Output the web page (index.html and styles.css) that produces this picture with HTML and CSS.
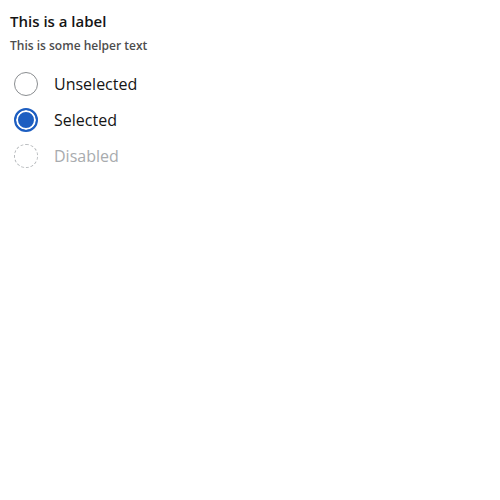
FILE: index.html
```html
<!DOCTYPE html>
<html>
<head>
<meta charset="utf-8">
<link rel="stylesheet" href="styles.css">
</head>
<body>
<div class="field">
  <div class="label">This is a label</div>
  <div class="helper">This is some helper text</div>
  <div class="options">
    <label class="option">
      <span class="radio"></span>
      <span class="text">Unselected</span>
    </label>
    <label class="option">
      <span class="radio checked"></span>
      <span class="text">Selected</span>
    </label>
    <label class="option disabled">
      <span class="radio"></span>
      <span class="text">Disabled</span>
    </label>
  </div>
</div>
</body>
</html>
```
FILE: styles.css
```css
html, body {
  margin: 0;
  background: #fff;
}
body {
  font-family: "Open Sans", "Liberation Sans", sans-serif;
  color: #151515;
}
.field {
  padding: 11px 10px;
}
.label {
  font-size: 15px;
  font-weight: 600;
  line-height: 20px;
}
.helper {
  font-size: 12px;
  font-weight: 600;
  color: #4d4d4d;
  line-height: 16px;
  margin-top: 7px;
}
.options {
  display: flex;
  flex-direction: column;
  margin-top: 12px;
}
.option {
  display: flex;
  align-items: center;
  height: 36px;
  gap: 16px;
  padding-left: 4px;
}
.radio {
  width: 24px;
  height: 24px;
  box-sizing: border-box;
  border: 1px solid #8a8d90;
  border-radius: 50%;
  flex: none;
}
.radio.checked {
  border: 2px solid #1d5ec1;
  background: #1d5ec1;
  box-shadow: inset 0 0 0 2px #fff;
}
.text {
  font-size: 16px;
  line-height: 24px;
}
.disabled .radio {
  border: 1px dashed #b8bbbe;
}
.disabled .text {
  color: #a8abae;
}
```
